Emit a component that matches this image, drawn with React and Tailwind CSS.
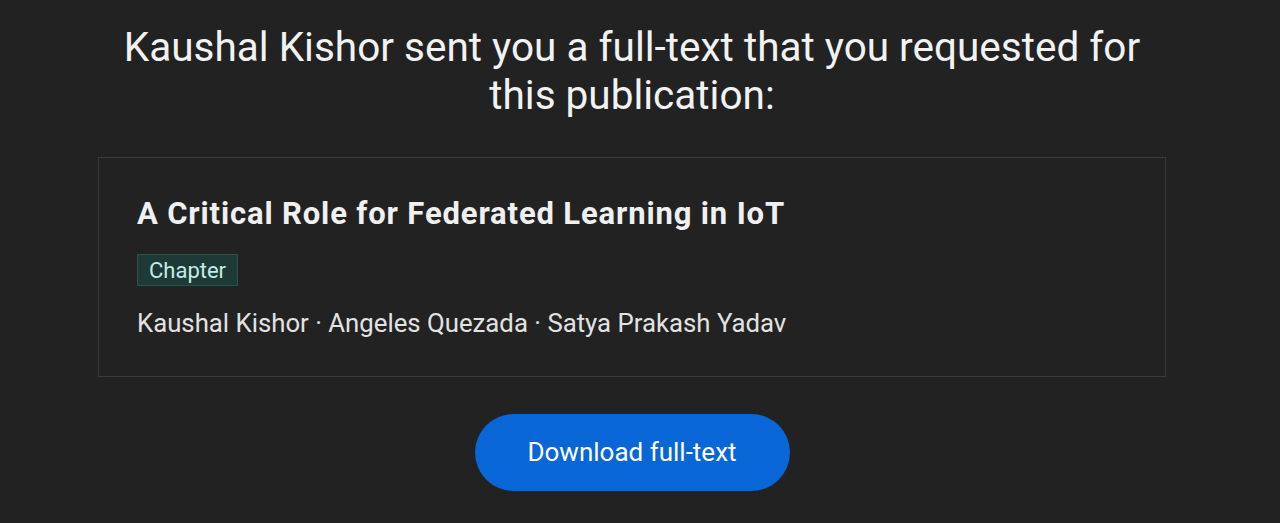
import React from 'react';

const authors = ['Kaushal Kishor', 'Angeles Quezada', 'Satya Prakash Yadav'];

const App = () => {
  return (
    <div className="min-h-[523px] w-full bg-[#222222] font-['Roboto',sans-serif] overflow-hidden">
      <div className="ml-[98px] w-[1068px] pt-[23px] flex flex-col items-center">
        {/* Header message */}
        <h1 className="text-center text-[40.5px] leading-[48px] font-normal text-[#f2f2f2] whitespace-nowrap">
          Kaushal Kishor sent you a full-text that you requested for
          <br />
          this publication:
        </h1>

        {/* Publication card */}
        <div className="mt-[38px] w-full border border-[#3a3a3a] pl-[38px] pr-[38px] pt-[38px] pb-[37px]">
          <h2 className="text-[31px] leading-[36px] font-bold text-[#f0f0f0] tracking-[0.85px]">
            A Critical Role for Federated Learning in IoT
          </h2>
          <div className="mt-[22px] flex">
            <span className="h-[32px] px-[11px] flex items-center bg-[#1d3a37] border border-[#2a524d] text-[22px] text-[#c3ebe4]">
              Chapter
            </span>
          </div>
          <p className="mt-[21px] text-[25.75px] leading-[32px] text-[#e2e2e2]">
            {authors.join(' · ')}
          </p>
        </div>

        {/* Download button */}
        <button className="mt-[37px] h-[77px] w-[315px] rounded-full bg-[#0866d6] text-[26px] text-white">
          Download full-text
        </button>
      </div>
    </div>
  );
};

export default App;
